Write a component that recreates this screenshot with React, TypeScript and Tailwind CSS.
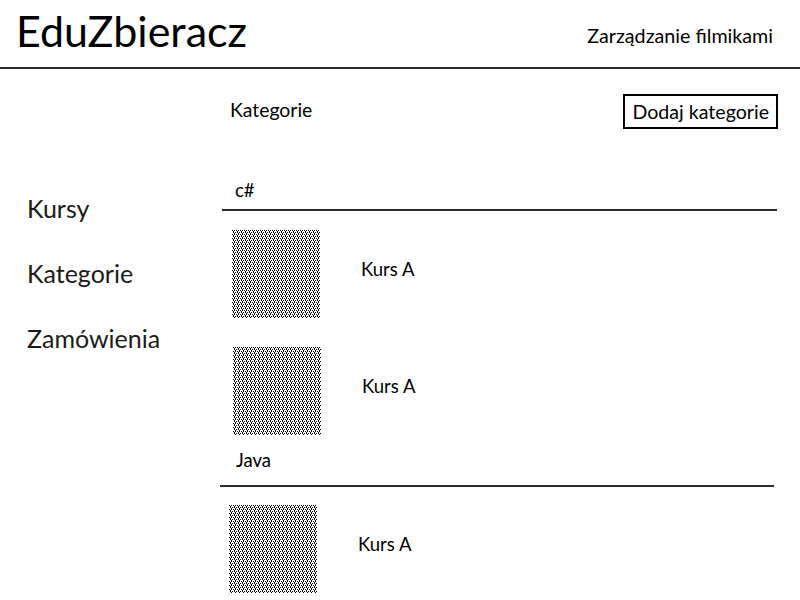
import React from 'react';

const font = "font-['Lato','Open_Sans',sans-serif]";

function Thumb() {
  return (
    <svg width="88" height="88" className="block shrink-0" shapeRendering="crispEdges">
      <defs>
        <pattern id="dots" width="4" height="4" patternUnits="userSpaceOnUse">
          <rect x="0" y="0" width="1" height="1" fill="#000" />
          <rect x="2" y="0" width="1" height="1" fill="#000" />
          <rect x="1" y="2" width="1" height="1" fill="#000" />
          <rect x="3" y="2" width="1" height="1" fill="#000" />
          <rect x="1" y="1" width="1" height="1" fill="#000" />
          <rect x="2" y="3" width="1" height="1" fill="#000" />
        </pattern>
      </defs>
      <rect width="88" height="88" fill="url(#dots)" />
    </svg>
  );
}

function CourseRow({ name, className }: { name: string; className: string }) {
  return (
    <div className={`flex items-start ${className}`}>
      <Thumb />
      <span className="pt-[27px] ml-[41px] text-[18.5px] leading-6 text-black">{name}</span>
    </div>
  );
}

export default function App() {
  return (
    <div className={`w-[800px] h-[600px] bg-white overflow-hidden text-black ${font}`}>
      {/* Nagłówek */}
      <header className="h-[69px] flex items-start justify-between border-b-2 border-[#2b2b2b]">
        <h1 className="ml-[16px] mt-[6px] text-[43px] leading-[50px] font-normal">EduZbieracz</h1>
        <span className="mr-[27px] mt-[24px] text-[19.7px] leading-6">Zarządzanie filmikami</span>
      </header>

      <div className="flex">
        {/* Menu boczne */}
        <nav className="w-[222px] shrink-0 pl-[27px] pt-[125px] flex flex-col gap-[36px] text-[25px] leading-[29px] text-[#1a1a1a]">
          <a className="block">Kursy</a>
          <a className="block">Kategorie</a>
          <a className="block">Zamówienia</a>
        </nav>

        {/* Treść */}
        <main className="w-[555px] flex flex-col">
          <div className="mt-[25px] flex items-center justify-between">
            <h2 className="pl-[8px] mb-[4px] text-[19.4px] leading-6 font-normal">Kategorie</h2>
            <button className="h-[35px] -mr-[1px] px-[7px] border-2 border-black text-[19.6px] leading-6">
              Dodaj kategorie
            </button>
          </div>

          <div className="mt-[49px] pl-[13px] text-[18.5px] leading-6">c#</div>
          <div className="mt-[7px] border-b-2 border-[#2b2b2b]" />
          <CourseRow name="Kurs A" className="mt-[19px] ml-[10px]" />
          <CourseRow name="Kurs A" className="mt-[29px] ml-[11px]" />

          <div className="mt-[13px] pl-[14px] text-[18.5px] leading-6">Java</div>
          <div className="mt-[13px] -ml-[2px] mr-[3px] border-b-2 border-[#2b2b2b]" />
          <CourseRow name="Kurs A" className="mt-[18px] ml-[7px]" />
        </main>
      </div>
    </div>
  );
}
